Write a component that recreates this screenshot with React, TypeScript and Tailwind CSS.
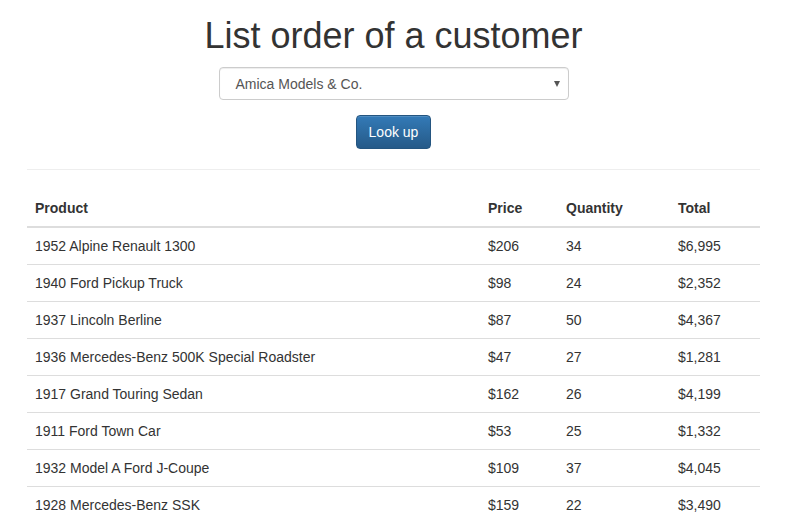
import React from 'react';

interface OrderLine {
  product: string;
  price: string;
  quantity: number;
  total: string;
}

const orders: OrderLine[] = [
  { product: '1952 Alpine Renault 1300', price: '$206', quantity: 34, total: '$6,995' },
  { product: '1940 Ford Pickup Truck', price: '$98', quantity: 24, total: '$2,352' },
  { product: '1937 Lincoln Berline', price: '$87', quantity: 50, total: '$4,367' },
  { product: '1936 Mercedes-Benz 500K Special Roadster', price: '$47', quantity: 27, total: '$1,281' },
  { product: '1917 Grand Touring Sedan', price: '$162', quantity: 26, total: '$4,199' },
  { product: '1911 Ford Town Car', price: '$53', quantity: 25, total: '$1,332' },
  { product: '1932 Model A Ford J-Coupe', price: '$109', quantity: 37, total: '$4,045' },
  { product: '1928 Mercedes-Benz SSK', price: '$159', quantity: 22, total: '$3,490' },
];

const App: React.FC = () => {
  return (
    <div className="min-h-[519px] bg-white text-[#333] text-[14px] leading-[20px] font-['Liberation_Sans',Arial,sans-serif]">
      <div className="pl-[27px] pr-[25px]">
        {/* Header + form */}
        <h1 className="pt-[16px] text-center text-[36px] leading-[40px] font-normal">List order of a customer</h1>

        <div className="mt-[11px] flex justify-center">
          <div className="w-[350px] h-[33px] rounded-[4px] border border-[#ccc] bg-white flex items-center justify-between pl-[16px] pr-[8px] text-[#555] shadow-[inset_0_1px_1px_rgba(0,0,0,0.075)]">
            <span>Amica Models &amp; Co.</span>
            <span className="w-0 h-0 border-l-[3.5px] border-r-[3.5px] border-t-[6px] border-l-transparent border-r-transparent border-t-[#555]" />
          </div>
        </div>

        <div className="mt-[15px] flex justify-center">
          <button className="h-[34px] px-[12px] rounded-[4px] border border-[#245580] text-white bg-[linear-gradient(#337ab7,#265a88)] shadow-[inset_0_1px_0_rgba(255,255,255,0.15)]">
            Look up
          </button>
        </div>

        <div className="mt-[20px] border-t border-[#eee]" />

        {/* Orders table */}
        <table className="mt-[20px] w-full border-collapse">
          <thead>
            <tr className="border-b-2 border-[#ddd] text-left">
              <th className="w-[453px] p-[8px] font-bold">Product</th>
              <th className="w-[78px] p-[8px] font-bold">Price</th>
              <th className="w-[112px] p-[8px] font-bold">Quantity</th>
              <th className="p-[8px] font-bold">Total</th>
            </tr>
          </thead>
          <tbody>
            {orders.map((o, i) => (
              <tr key={o.product} className={i > 0 ? 'border-t border-[#ddd]' : ''}>
                <td className="p-[8px]">{o.product}</td>
                <td className="p-[8px]">{o.price}</td>
                <td className="p-[8px]">{o.quantity}</td>
                <td className="p-[8px]">{o.total}</td>
              </tr>
            ))}
          </tbody>
        </table>
      </div>
    </div>
  );
};

export default App;
